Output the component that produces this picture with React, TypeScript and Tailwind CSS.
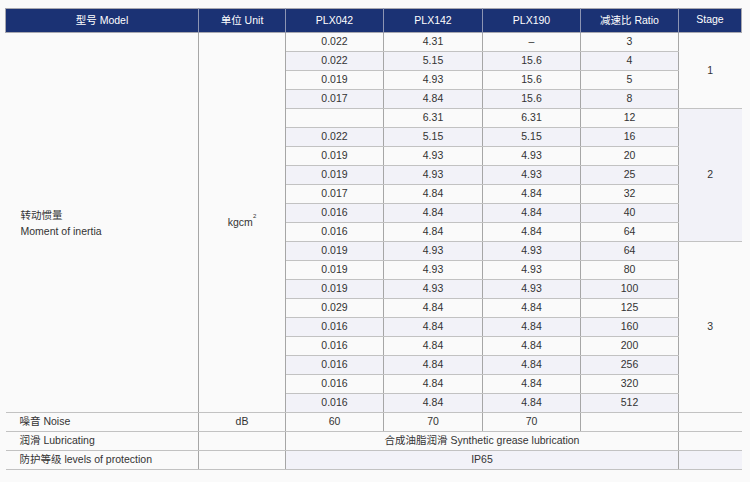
import React from "react";

const rows: string[][] = [
  ["0.022", "4.31", "–", "3"],
  ["0.022", "5.15", "15.6", "4"],
  ["0.019", "4.93", "15.6", "5"],
  ["0.017", "4.84", "15.6", "8"],
  ["", "6.31", "6.31", "12"],
  ["0.022", "5.15", "5.15", "16"],
  ["0.019", "4.93", "4.93", "20"],
  ["0.019", "4.93", "4.93", "25"],
  ["0.017", "4.84", "4.84", "32"],
  ["0.016", "4.84", "4.84", "40"],
  ["0.016", "4.84", "4.84", "64"],
  ["0.019", "4.93", "4.93", "64"],
  ["0.019", "4.93", "4.93", "80"],
  ["0.019", "4.93", "4.93", "100"],
  ["0.029", "4.84", "4.84", "125"],
  ["0.016", "4.84", "4.84", "160"],
  ["0.016", "4.84", "4.84", "200"],
  ["0.016", "4.84", "4.84", "256"],
  ["0.016", "4.84", "4.84", "320"],
  ["0.016", "4.84", "4.84", "512"],
];

const stages: Record<number, { span: number; label: string; alt: boolean }> = {
  0: { span: 4, label: "1", alt: false },
  4: { span: 7, label: "2", alt: true },
  11: { span: 9, label: "3", alt: false },
};

const cell = "border-b border-r border-b-[#c2c2c2] border-r-[#a6a6a6] text-center p-0";

export default function App() {
  return (
    <div
      className="min-h-[482px] w-[750px] bg-[#fafafa] pt-[8px] pl-[5px] text-[10.5px] text-[#333]"
      style={{ fontFamily: '"Liberation Sans", "Noto Sans CJK SC", sans-serif' }}
    >
      <table className="table-fixed w-[736px] border-collapse">
        <colgroup>
          <col className="w-[193px]" />
          <col className="w-[87px]" />
          <col className="w-[98px]" />
          <col className="w-[99px]" />
          <col className="w-[98px]" />
          <col className="w-[98px]" />
          <col className="w-[63px]" />
        </colgroup>
        <thead>
          <tr className="h-[24px] bg-[#1b3274] text-white border border-[#a8a8b0]">
            {["型号 Model", "单位 Unit", "PLX042", "PLX142", "PLX190", "减速比 Ratio", "Stage"].map((h, i) => (
              <th
                key={i}
                className={`font-normal text-center p-0 ${i < 6 ? "border-r border-r-[#8d95b3]" : ""} ${i === 6 ? "pb-[2px]" : ""}`}
              >
                {h}
              </th>
            ))}
          </tr>
        </thead>
        <tbody>
          {rows.map((r, i) => {
            const alt = i % 2 === 1;
            const bg = alt ? "bg-[#f2f2f8]" : "bg-[#fafafa]";
            const st = stages[i];
            return (
              <tr key={i} className="h-[19px]">
                {i === 0 && (
                  <td rowSpan={20} className="border-b border-r border-b-[#c2c2c2] border-r-[#a6a6a6] p-0 pl-[15px] text-left align-middle bg-[#fafafa] leading-[16px]">
                    <div>转动惯量</div>
                    <div>Moment of inertia</div>
                  </td>
                )}
                {i === 0 && (
                  <td rowSpan={20} className={`${cell} bg-[#fafafa]`}>
                    kgcm<sup className="text-[6px] align-[5px]">2</sup>
                  </td>
                )}
                <td className={`${cell} ${bg}`}>{r[0]}</td>
                <td className={`${cell} ${bg}`}>{r[1]}</td>
                <td className={`${cell} ${bg}`}>{r[2]}</td>
                <td className={`${cell} ${bg}`}>{r[3]}</td>
                {st && (
                  <td
                    rowSpan={st.span}
                    className={`border-b border-b-[#c2c2c2] text-center p-0 ${st.alt ? "bg-[#f2f2f8]" : "bg-[#fafafa]"}`}
                  >
                    {st.label}
                  </td>
                )}
              </tr>
            );
          })}
          <tr className="h-[19px]">
            <td className="border-b border-r border-b-[#c2c2c2] border-r-[#a6a6a6] p-0 pl-[14px] text-left bg-[#fafafa]">噪音 Noise</td>
            <td className={`${cell} bg-[#fafafa]`}>dB</td>
            <td className={`${cell} bg-[#fafafa]`}>60</td>
            <td className={`${cell} bg-[#fafafa]`}>70</td>
            <td className={`${cell} bg-[#fafafa]`}>70</td>
            <td className={`${cell} bg-[#fafafa]`}></td>
            <td className="border-b border-b-[#c2c2c2] bg-[#fafafa] p-0"></td>
          </tr>
          <tr className="h-[19px]">
            <td className="border-b border-r border-b-[#c2c2c2] border-r-[#a6a6a6] p-0 pl-[14px] text-left bg-[#fafafa]">润滑 Lubricating</td>
            <td className={`${cell} bg-[#fafafa]`}></td>
            <td colSpan={4} className={`${cell} bg-[#fafafa]`}>合成油脂润滑 Synthetic grease lubrication</td>
            <td className="border-b border-b-[#c2c2c2] bg-[#fafafa] p-0"></td>
          </tr>
          <tr className="h-[19px]">
            <td className="border-b border-r border-b-[#c2c2c2] border-r-[#a6a6a6] p-0 pl-[14px] text-left bg-[#fafafa]">防护等级 levels of protection</td>
            <td className={`${cell} bg-[#fafafa]`}></td>
            <td colSpan={4} className={`${cell} bg-[#f2f2f8]`}>IP65</td>
            <td className="border-b border-b-[#c2c2c2] bg-[#f2f2f8] p-0"></td>
          </tr>
        </tbody>
      </table>
    </div>
  );
}
